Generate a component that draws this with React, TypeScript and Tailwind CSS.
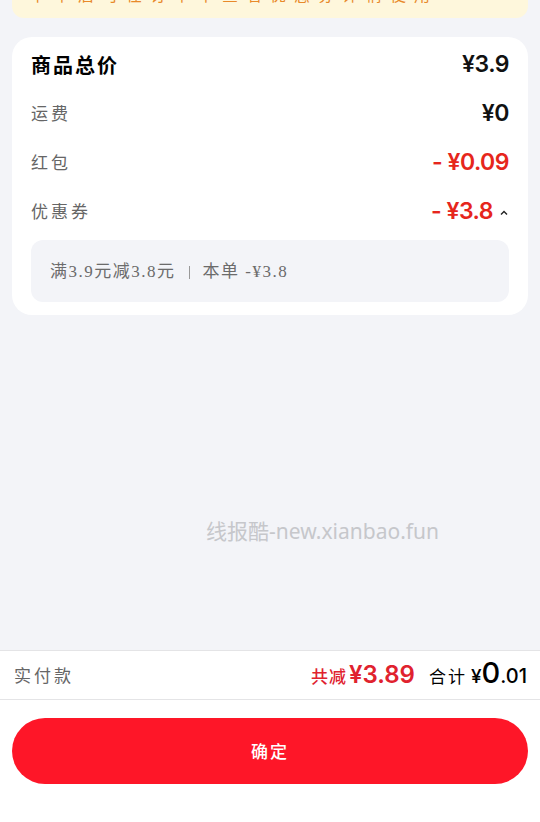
import React from "react";

const Row = ({
  label,
  value,
  strong,
  red,
  chevron,
}: {
  label: string;
  value: string;
  strong?: boolean;
  red?: boolean;
  chevron?: boolean;
}) => (
  <div className="flex h-[49px] items-center justify-between">
    <span
      className={
        strong
          ? "font-['Noto_Sans_CJK_SC',sans-serif] text-[20px] font-bold tracking-[2px] text-black"
          : "font-['Noto_Sans_CJK_SC',sans-serif] text-[17px] tracking-[3px] text-[#666666] -mt-[2px]"
      }
    >
      {label}
    </span>
    <div className="flex items-center">
      <span
        className={`font-['Inter','Noto_Sans_CJK_SC',sans-serif] text-[23px] font-semibold tracking-[-0.5px] ${red ? "text-[#e6261c]" : "text-[#111111]"}`}
      >
        {value}
      </span>
      {chevron && (
        <svg width="10" height="8" viewBox="0 0 10 8" className="ml-[6px] mt-[2px]">
          <path d="M2 5.5 L5 2.5 L8 5.5" fill="none" stroke="#222" strokeWidth="1.4" />
        </svg>
      )}
    </div>
  </div>
);

export default function App() {
  return (
    <main className="flex h-[822px] w-[540px] flex-col overflow-hidden bg-[#f3f4f8]">
      {/* banner, top is scrolled off */}
      <div className="mx-[12px] -mt-[22px] flex h-[40px] items-center rounded-b-[12px] bg-[#fef7dc] px-[18px]">
        <span className="-mt-[8px] font-['Noto_Sans_CJK_SC',sans-serif] text-[16px] tracking-[8px] text-[#e8892a]">
          下单后可在订单中查看优惠券详情使用
        </span>
      </div>

      <section className="mx-[12px] mt-[19px] rounded-[20px] bg-white px-[19px] pt-[3px] pb-[13px]">
        <Row label="商品总价" value="¥3.9" strong />
        <Row label="运费" value="¥0" />
        <Row label="红包" value="- ¥0.09" red />
        <Row label="优惠券" value="- ¥3.8" red chevron />
        <div className="mt-[4px] flex h-[62px] items-center rounded-[12px] bg-[#f3f4f8] px-[19px] pt-[2px] font-['Liberation_Serif','Noto_Sans_CJK_SC',serif] text-[17px] tracking-[1.5px] text-[#6b6b6b]">
          <span>满3.9元减3.8元</span>
          <span className="mx-[13px] h-[13px] w-px bg-[#999]" />
          <span>本单 -¥3.8</span>
        </div>
      </section>

      <div className="flex-1">
        <div className="mt-[202px] pl-[206px] font-['Noto_Sans','Noto_Sans_CJK_SC',sans-serif] text-[21px] leading-[28px] text-[#c6c7cb]">
          线报酷-new.xianbao.fun
        </div>
      </div>

      <div className="flex h-[50px] items-center justify-between border-y border-[#e4e4e6] bg-white pl-[14px] pr-[13px]">
        <span className="font-['Noto_Sans_CJK_SC',sans-serif] text-[17px] tracking-[3px] text-[#666666]">
          实付款
        </span>
        <div className="flex items-baseline font-['Inter','Noto_Sans_CJK_SC',sans-serif]">
          <span className="text-[17px] font-medium tracking-[1px] text-[#e0222e]">共减</span>
          <span className="ml-[2px] text-[24px] font-semibold text-[#e0222e]">¥3.89</span>
          <span className="ml-[14px] text-[17px] tracking-[2px] text-black">合计</span>
          <span className="ml-[4px] text-[19px] font-medium text-black">¥</span>
          <span className="text-[29px] font-medium leading-none text-black">0</span>
          <span className="text-[20px] font-medium text-black">.01</span>
        </div>
      </div>

      <div className="h-[122px] bg-white px-[12px] pt-[18px]">
        <button className="flex h-[66px] w-full items-center justify-center rounded-full bg-[#fe1628]">
          <span className="font-['Noto_Sans_CJK_SC',sans-serif] text-[17px] font-medium tracking-[2px] text-white">
            确定
          </span>
        </button>
      </div>
    </main>
  );
}
